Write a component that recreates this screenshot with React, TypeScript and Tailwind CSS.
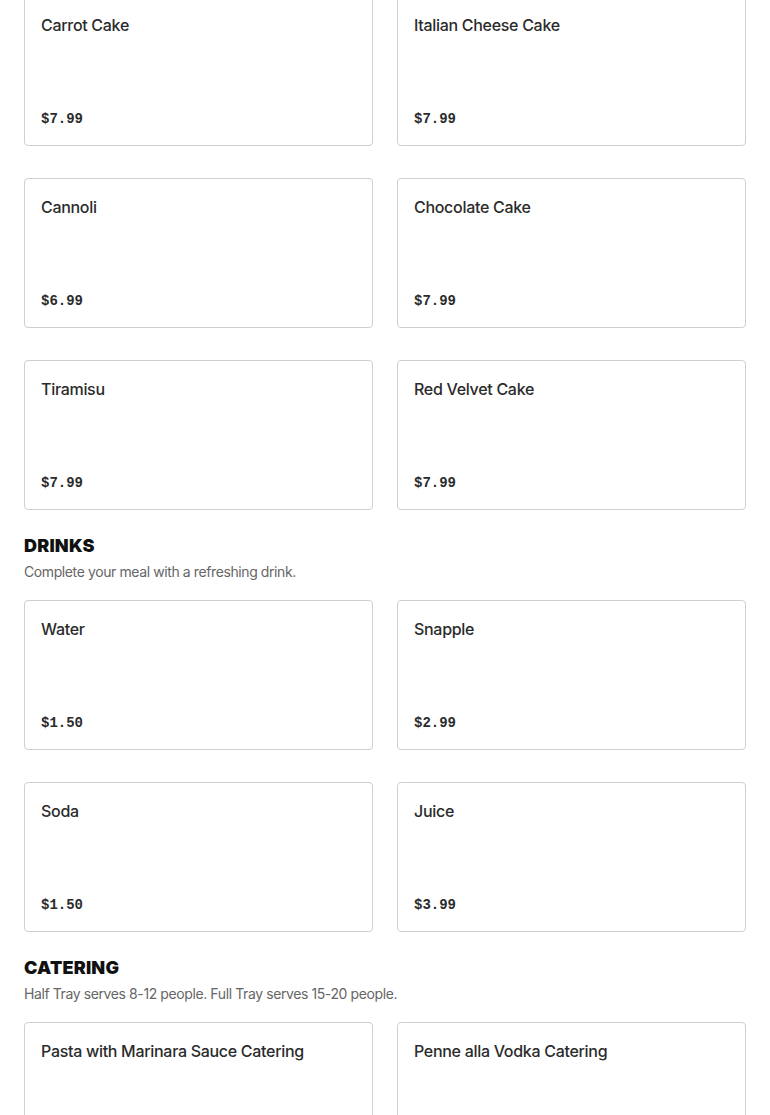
import React from 'react';

type Item = { name: string; price?: string };

const desserts: Item[] = [
  { name: 'Carrot Cake', price: '$7.99' },
  { name: 'Italian Cheese Cake', price: '$7.99' },
  { name: 'Cannoli', price: '$6.99' },
  { name: 'Chocolate Cake', price: '$7.99' },
  { name: 'Tiramisu', price: '$7.99' },
  { name: 'Red Velvet Cake', price: '$7.99' },
];

const drinks: Item[] = [
  { name: 'Water', price: '$1.50' },
  { name: 'Snapple', price: '$2.99' },
  { name: 'Soda', price: '$1.50' },
  { name: 'Juice', price: '$3.99' },
];

const catering: Item[] = [
  { name: 'Pasta with Marinara Sauce Catering' },
  { name: 'Penne alla Vodka Catering' },
];

// Tarjeta de un plato del menú
const MenuCard = ({ item }: { item: Item }) => (
  <div className="h-[150px] border border-[#cfcfcf] rounded-[4px] bg-white px-4 py-4 flex flex-col justify-between">
    <div className="text-[16px] leading-6 font-medium text-[#2b2b2b] font-['Inter',sans-serif] tracking-[-0.3px]">
      {item.name}
    </div>
    {item.price && (
      <div className="text-[14px] leading-5 font-bold text-[#2b2b2b] font-['Liberation_Mono',monospace]">
        {item.price}
      </div>
    )}
  </div>
);

const Grid = ({ items }: { items: Item[] }) => (
  <div className="grid grid-cols-2 gap-x-6 gap-y-8">
    {items.map((it) => (
      <MenuCard key={it.name} item={it} />
    ))}
  </div>
);

const Section = ({ title, description, items }: { title: string; description: string; items: Item[] }) => (
  <section className="mt-6">
    <h2 className="text-[18px] leading-6 font-black text-[#111] uppercase font-['Inter',sans-serif] tracking-[0.2px]">{title}</h2>
    <p className="mt-1 text-[14px] leading-5 text-[#666] font-['Inter',sans-serif] tracking-[-0.4px]">{description}</p>
    <div className="mt-[18px]">
      <Grid items={items} />
    </div>
  </section>
);

export default function App() {
  return (
    <div className="w-[770px] h-[1115px] overflow-hidden bg-white">
      <div className="px-6 -mt-1">
        <Grid items={desserts} />
        <Section title="Drinks" description="Complete your meal with a refreshing drink." items={drinks} />
        <Section
          title="Catering"
          description="Half Tray serves 8-12 people. Full Tray serves 15-20 people."
          items={catering}
        />
      </div>
    </div>
  );
}
